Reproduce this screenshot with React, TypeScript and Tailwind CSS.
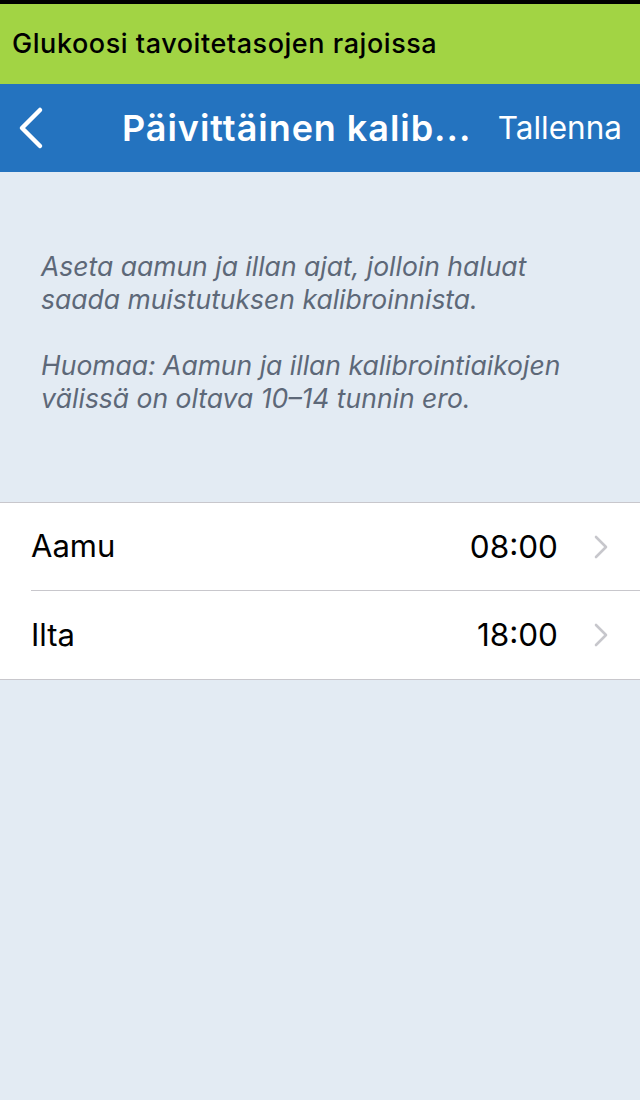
const font = { fontFamily: "Inter, 'Noto Sans', sans-serif" };

interface RowProps {
  label: string;
  value: string;
  last?: boolean;
}

const Chevron = () => (
  <svg width="14" height="24" viewBox="0 0 14 24" className="ml-[36px] shrink-0">
    <path d="M2 2 L12 12 L2 22" fill="none" stroke="#c7c7cc" strokeWidth="2.6" strokeLinecap="round" strokeLinejoin="round" />
  </svg>
);

const TimeRow: React.FC<RowProps> = ({ label, value, last }) => {
  return (
    <div className="flex h-[88px] items-stretch bg-white pl-[31px]">
      <div
        className={
          last
            ? "flex flex-1 items-center pr-[32px]"
            : "flex flex-1 items-center border-b border-[#c8c7cc] pr-[32px]"
        }
      >
        <span className="text-[31px] text-black">{label}</span>
        <span className="ml-auto text-[31.5px] text-black">{value}</span>
        <Chevron />
      </div>
    </div>
  );
};

export default function App() {
  return (
    <div className="flex h-[1100px] w-[640px] flex-col bg-[#e3ebf3]" style={font}>
      <div className="h-[4px] bg-black" />
      <div className="flex h-[80px] items-center bg-[#a2d444] px-[12px]">
        <span className="text-[27px] font-medium tracking-[0.55px] text-black">
          Glukoosi tavoitetasojen rajoissa
        </span>
      </div>
      <div className="flex h-[88px] items-center bg-[#2473bf] pr-[18px] pl-[14px] text-white">
        <svg width="32" height="44" viewBox="0 0 32 44" className="shrink-0">
          <path
            d="M26 4 L8 22 L26 40"
            fill="none"
            stroke="white"
            strokeWidth="4.5"
            strokeLinecap="round"
            strokeLinejoin="round"
          />
        </svg>
        <h1 className="ml-[76px] text-[36px] font-semibold tracking-[0.95px] whitespace-nowrap">
          Päivittäinen kalib...
        </h1>
        <button className="ml-auto text-[31.5px]">Tallenna</button>
      </div>
      <div className="px-[41px] pt-[78px] pb-[87px] text-[26.5px] leading-[33px] text-[#5d6878] italic">
        <p>
          Aseta aamun ja illan ajat, jolloin haluat
          <br />
          saada muistutuksen kalibroinnista.
        </p>
        <p className="mt-[33px]">
          Huomaa: Aamun ja illan kalibrointiaikojen
          <br />
          välissä on oltava 10–14 tunnin ero.
        </p>
      </div>
      <div className="border-y border-[#c8c7cc]">
        <TimeRow label="Aamu" value="08:00" />
        <TimeRow label="Ilta" value="18:00" last />
      </div>
    </div>
  );
}
